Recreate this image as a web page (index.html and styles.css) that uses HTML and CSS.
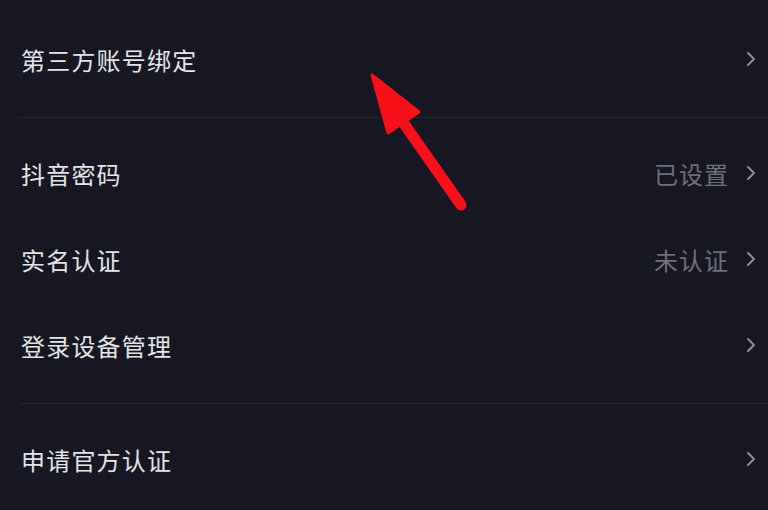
FILE: index.html
```html
<!DOCTYPE html>
<html lang="zh-CN">
<head>
<meta charset="utf-8">
<link rel="stylesheet" href="styles.css">
</head>
<body>
<div class="list">
  <div class="row"><span class="label">第三方账号绑定</span><span class="right"><svg class="chev" viewBox="0 0 10 16"><path d="M2 2 L8 8 L2 14"/></svg></span></div>
  <div class="divider"></div>
  <div class="row"><span class="label">抖音密码</span><span class="right"><span class="value">已设置</span><svg class="chev" viewBox="0 0 10 16"><path d="M2 2 L8 8 L2 14"/></svg></span></div>
  <div class="row"><span class="label">实名认证</span><span class="right"><span class="value">未认证</span><svg class="chev" viewBox="0 0 10 16"><path d="M2 2 L8 8 L2 14"/></svg></span></div>
  <div class="row"><span class="label">登录设备管理</span><span class="right"><svg class="chev" viewBox="0 0 10 16"><path d="M2 2 L8 8 L2 14"/></svg></span></div>
  <div class="divider"></div>
  <div class="row"><span class="label">申请官方认证</span><span class="right"><svg class="chev" viewBox="0 0 10 16"><path d="M2 2 L8 8 L2 14"/></svg></span></div>
</div>
<svg class="arrow" viewBox="0 0 768 510" width="768" height="510">
  <polygon points="372,75 419,112 388,133" fill="#f5101a" stroke="#f5101a" stroke-width="3" stroke-linejoin="round"/>
  <line x1="400" y1="118" x2="461" y2="205" stroke="#f5101a" stroke-width="11" stroke-linecap="round"/>
</svg>
</body>
</html>
```

FILE: styles.css
```css
html, body {
  margin: 0;
  padding: 0;
  background: #161722;
  width: 768px;
  height: 510px;
  overflow: hidden;
}
body {
  font-family: "Noto Sans CJK SC", "Noto Sans", sans-serif;
  position: relative;
}
.list {
  padding-top: 16px;
  display: flex;
  flex-direction: column;
}
.row {
  height: 86px;
  display: flex;
  align-items: center;
  justify-content: space-between;
  padding: 0 12px 0 21px;
}
.label {
  color: #e4e4e7;
  font-size: 24px;
  letter-spacing: 1.2px;
}
.right {
  display: flex;
  align-items: center;
  gap: 17px;
}
.value {
  color: #6f7079;
  font-size: 24px;
  letter-spacing: 1px;
}
.chev {
  width: 10px;
  height: 16px;
  fill: none;
  stroke: #8d8e96;
  stroke-width: 2;
  stroke-linecap: round;
  stroke-linejoin: round;
}
.divider {
  height: 1px;
  background: #262733;
  margin: 15px 0 12px 20px;
}
.arrow {
  position: absolute;
  left: 0;
  top: 0;
  pointer-events: none;
}
```
